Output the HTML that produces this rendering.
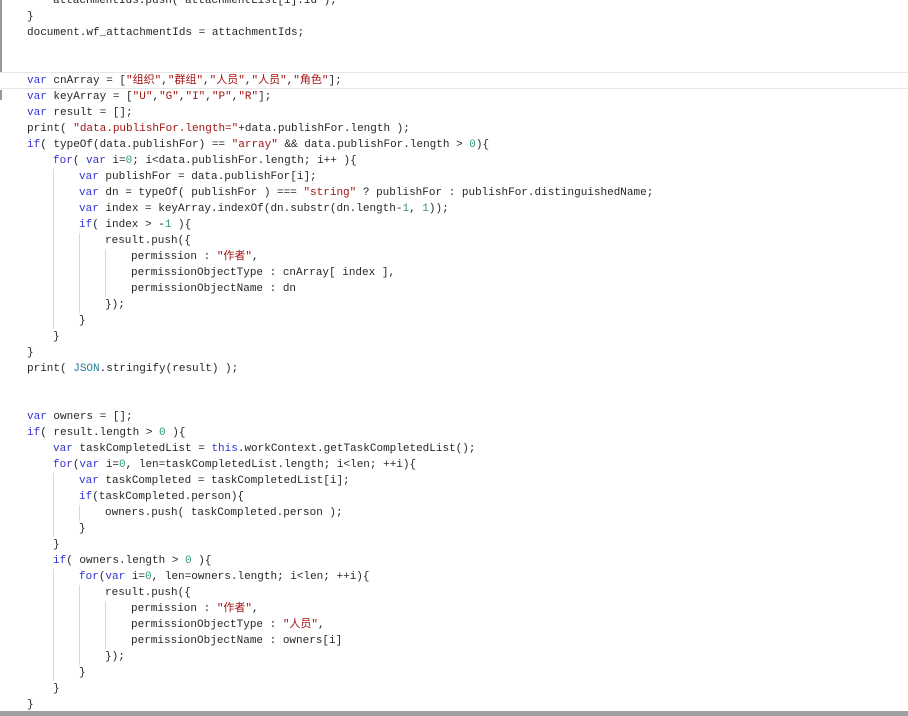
<!DOCTYPE html>
<html><head><meta charset="utf-8"><style>
html,body{margin:0;padding:0;background:#fff;width:908px;height:716px;overflow:hidden;position:relative}
.c{position:absolute;left:0;top:-7px;width:908px;font-family:"Liberation Mono","Noto Sans CJK SC",monospace;font-size:11px;color:#262626}
.l{height:16px;line-height:16px;white-space:pre;padding-left:27px}
.g{display:inline-block;width:26px;height:16px;vertical-align:top;box-sizing:border-box}
.b{border-left:1px solid #d8d8d8}
.k{color:#3434d4}.s{color:#a31515}.n{color:#2f9a78}.t{color:#2a7f99}
.hl{position:absolute;left:0;top:72px;width:908px;height:15px;border-top:1px solid #e6e6e6;border-bottom:1px solid #e6e6e6}
</style></head><body>
<div class="hl"></div>
<div style="position:absolute;left:0;top:0;width:2px;height:72px;background:#9a9a9a"></div>
<div style="position:absolute;left:0;top:90px;width:2px;height:10px;background:#9a9a9a"></div>
<div style="position:absolute;left:0;top:711px;width:908px;height:5px;background:#a0a0a0"></div>
<div class="c">
<div class="l"><span class="g"></span>attachmentIds.push( attachmentList[i].id );</div>
<div class="l">}</div>
<div class="l">document.wf_attachmentIds = attachmentIds;</div>
<div class="l"> </div>
<div class="l"> </div>
<div class="l"><span class="k">var</span> cnArray = [<span class="s">"组织"</span>,<span class="s">"群组"</span>,<span class="s">"人员"</span>,<span class="s">"人员"</span>,<span class="s">"角色"</span>];</div>
<div class="l"><span class="k">var</span> keyArray = [<span class="s">"U"</span>,<span class="s">"G"</span>,<span class="s">"I"</span>,<span class="s">"P"</span>,<span class="s">"R"</span>];</div>
<div class="l"><span class="k">var</span> result = [];</div>
<div class="l">print( <span class="s">"data.publishFor.length="</span>+data.publishFor.length );</div>
<div class="l"><span class="k">if</span>( typeOf(data.publishFor) == <span class="s">"array"</span> &amp;&amp; data.publishFor.length &gt; <span class="n">0</span>){</div>
<div class="l"><span class="g"></span><span class="k">for</span>( <span class="k">var</span> i=<span class="n">0</span>; i&lt;data.publishFor.length; i++ ){</div>
<div class="l"><span class="g"></span><span class="g b"></span><span class="k">var</span> publishFor = data.publishFor[i];</div>
<div class="l"><span class="g"></span><span class="g b"></span><span class="k">var</span> dn = typeOf( publishFor ) === <span class="s">"string"</span> ? publishFor : publishFor.distinguishedName;</div>
<div class="l"><span class="g"></span><span class="g b"></span><span class="k">var</span> index = keyArray.indexOf(dn.substr(dn.length-<span class="n">1</span>, <span class="n">1</span>));</div>
<div class="l"><span class="g"></span><span class="g b"></span><span class="k">if</span>( index &gt; -<span class="n">1</span> ){</div>
<div class="l"><span class="g"></span><span class="g b"></span><span class="g b"></span>result.push({</div>
<div class="l"><span class="g"></span><span class="g b"></span><span class="g b"></span><span class="g b"></span>permission : <span class="s">"作者"</span>,</div>
<div class="l"><span class="g"></span><span class="g b"></span><span class="g b"></span><span class="g b"></span>permissionObjectType : cnArray[ index ],</div>
<div class="l"><span class="g"></span><span class="g b"></span><span class="g b"></span><span class="g b"></span>permissionObjectName : dn</div>
<div class="l"><span class="g"></span><span class="g b"></span><span class="g b"></span>});</div>
<div class="l"><span class="g"></span><span class="g b"></span>}</div>
<div class="l"><span class="g"></span>}</div>
<div class="l">}</div>
<div class="l">print( <span class="t">JSON</span>.stringify(result) );</div>
<div class="l"> </div>
<div class="l"> </div>
<div class="l"><span class="k">var</span> owners = [];</div>
<div class="l"><span class="k">if</span>( result.length &gt; <span class="n">0</span> ){</div>
<div class="l"><span class="g"></span><span class="k">var</span> taskCompletedList = <span class="k">this</span>.workContext.getTaskCompletedList();</div>
<div class="l"><span class="g"></span><span class="k">for</span>(<span class="k">var</span> i=<span class="n">0</span>, len=taskCompletedList.length; i&lt;len; ++i){</div>
<div class="l"><span class="g"></span><span class="g b"></span><span class="k">var</span> taskCompleted = taskCompletedList[i];</div>
<div class="l"><span class="g"></span><span class="g b"></span><span class="k">if</span>(taskCompleted.person){</div>
<div class="l"><span class="g"></span><span class="g b"></span><span class="g b"></span>owners.push( taskCompleted.person );</div>
<div class="l"><span class="g"></span><span class="g b"></span>}</div>
<div class="l"><span class="g"></span>}</div>
<div class="l"><span class="g"></span><span class="k">if</span>( owners.length &gt; <span class="n">0</span> ){</div>
<div class="l"><span class="g"></span><span class="g b"></span><span class="k">for</span>(<span class="k">var</span> i=<span class="n">0</span>, len=owners.length; i&lt;len; ++i){</div>
<div class="l"><span class="g"></span><span class="g b"></span><span class="g b"></span>result.push({</div>
<div class="l"><span class="g"></span><span class="g b"></span><span class="g b"></span><span class="g b"></span>permission : <span class="s">"作者"</span>,</div>
<div class="l"><span class="g"></span><span class="g b"></span><span class="g b"></span><span class="g b"></span>permissionObjectType : <span class="s">"人员"</span>,</div>
<div class="l"><span class="g"></span><span class="g b"></span><span class="g b"></span><span class="g b"></span>permissionObjectName : owners[i]</div>
<div class="l"><span class="g"></span><span class="g b"></span><span class="g b"></span>});</div>
<div class="l"><span class="g"></span><span class="g b"></span>}</div>
<div class="l"><span class="g"></span>}</div>
<div class="l">}</div>
</div>
</body></html>
